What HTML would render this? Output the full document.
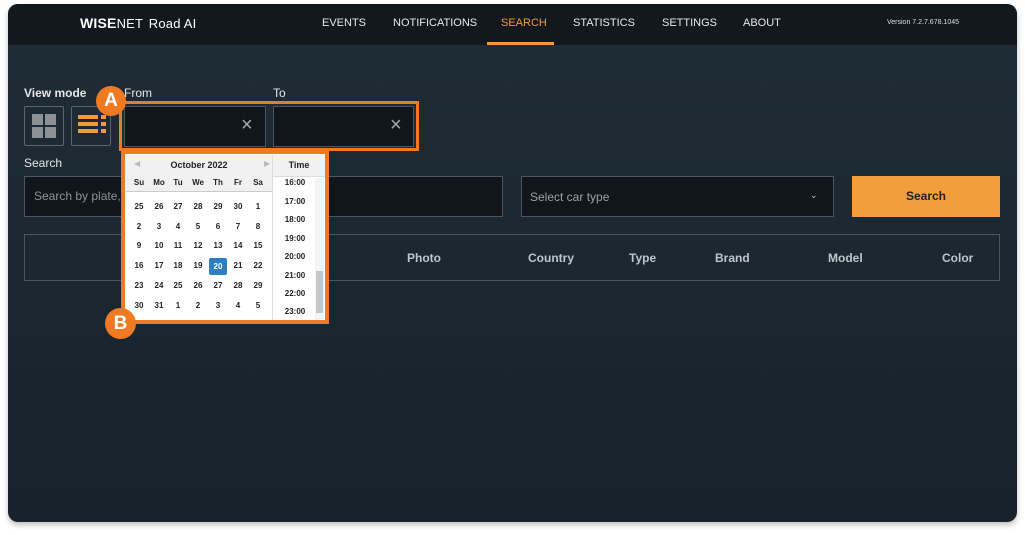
<!DOCTYPE html>
<html><head><meta charset="utf-8"><style>
*{margin:0;padding:0;box-sizing:border-box}
body{width:1025px;height:535px;background:#fff;font-family:"Liberation Sans",sans-serif;position:relative;overflow:hidden}
.abs{position:absolute}
.panel{left:8px;top:4px;width:1009px;height:518px;border-radius:10px;background:linear-gradient(#1f2d37,#17222b);overflow:hidden;box-shadow:0 3px 6px rgba(0,0,0,.25)}
.hdr{left:0;top:0;width:1009px;height:41px;background:#12181d}
.nav{color:#e8e8e8;font-size:11px;top:13px}
.lbl{color:#e6e6e6;font-size:12px}
.inp{background:#10161b;border:1px solid #4a5660}
.d{position:absolute;width:18px;height:15px;line-height:15px;text-align:center;font-size:8px;font-weight:bold;color:#222}
.t{position:absolute;left:278px;width:34px;font-size:8px;color:#222;text-align:center;font-weight:bold}
.th{color:#bfc5ca;font-size:12px;font-weight:bold;top:251px}
</style></head><body>
<div class="abs panel">
 <div class="abs hdr">
  <div class="abs" style="left:72px;top:11px;color:#fff;font-size:13px;letter-spacing:.2px"><b style="font-size:14px">WISE</b>NET <span style="margin-left:2px">Road AI</span></div>
  <div class="abs nav" style="left:314px">EVENTS</div>
  <div class="abs nav" style="left:385px">NOTIFICATIONS</div>
  <div class="abs nav" style="left:493px;color:#f29a38">SEARCH</div>
  <div class="abs" style="left:479px;top:38px;width:67px;height:3px;background:#f29a38"></div>
  <div class="abs nav" style="left:565px">STATISTICS</div>
  <div class="abs nav" style="left:654px">SETTINGS</div>
  <div class="abs nav" style="left:735px">ABOUT</div>
  <div class="abs" style="left:879px;top:15px;color:#ddd;font-size:7px">Version 7.2.7.678.1045</div>
 </div>
</div>
<div class="abs lbl" style="left:24px;top:86px;font-weight:bold">View mode</div>
<div class="abs lbl" style="left:124px;top:86px">From</div>
<div class="abs lbl" style="left:273px;top:86px">To</div>
<div class="abs" style="left:24px;top:106px;width:40px;height:40px;border:1px solid #5a656e;border-radius:2px"></div>
<div class="abs" style="left:32px;top:114px;width:11px;height:11px;background:#8a9298"></div>
<div class="abs" style="left:45px;top:114px;width:11px;height:11px;background:#8a9298"></div>
<div class="abs" style="left:32px;top:127px;width:11px;height:11px;background:#8a9298"></div>
<div class="abs" style="left:45px;top:127px;width:11px;height:11px;background:#8a9298"></div>
<div class="abs" style="left:71px;top:106px;width:40px;height:40px;border:1px solid #5a656e;border-radius:2px"></div>
<div class="abs" style="left:78px;top:115px;width:20px;height:4px;background:#f29a38;box-shadow:0 7px 0 #f29a38,0 14px 0 #f29a38"></div>
<div class="abs" style="left:101px;top:115px;width:5px;height:4px;background:#f29a38;box-shadow:0 7px 0 #f29a38,0 14px 0 #f29a38"></div>
<div class="abs" style="left:119px;top:101px;width:300px;height:50px;border:3px solid #f07a22"></div>
<div class="abs inp" style="left:124px;top:106px;width:142px;height:41px"></div>
<div class="abs" style="left:241px;top:114px;color:#aaa;font-size:20px">×</div>
<div class="abs inp" style="left:273px;top:106px;width:141px;height:41px"></div>
<div class="abs" style="left:390px;top:114px;color:#aaa;font-size:20px">×</div>
<div class="abs" style="left:96px;top:86px;width:30px;height:30px;border-radius:50%;background:#f07a22;color:#fff;font-weight:bold;font-size:19px;text-align:center;line-height:30px">A</div>
<div class="abs lbl" style="left:24px;top:156px">Search</div>
<div class="abs inp" style="left:24px;top:176px;width:479px;height:41px"></div>
<div class="abs" style="left:34px;top:189px;color:#8a939a;font-size:12px">Search by plate,</div>
<div class="abs inp" style="left:521px;top:176px;width:313px;height:41px"></div>
<div class="abs" style="left:530px;top:190px;color:#9aa2a8;font-size:12px">Select car type</div>
<div class="abs" style="left:810px;top:190px;color:#ccc;font-size:9px">&#8964;</div>
<div class="abs" style="left:852px;top:176px;width:148px;height:41px;background:#f29e3a;color:#222;font-weight:bold;font-size:12px;text-align:center;line-height:41px">Search</div>
<div class="abs" style="left:24px;top:234px;width:976px;height:47px;border:1px solid #4a5660"></div>
<div class="abs th" style="left:407px">Photo</div>
<div class="abs th" style="left:528px">Country</div>
<div class="abs th" style="left:629px">Type</div>
<div class="abs th" style="left:715px">Brand</div>
<div class="abs th" style="left:828px">Model</div>
<div class="abs th" style="left:942px">Color</div>
<div class="abs" style="left:121px;top:150px;width:208px;height:174px;background:#f07a22"></div>
<div class="abs" style="left:125px;top:154px;width:200px;height:166px;background:#fff"></div>
<div class="abs" style="left:126px;top:155px;width:146px;height:37px;background:#f1f1f1;border-bottom:1px solid #ccc"></div>
<div class="abs" style="left:273px;top:155px;width:52px;height:22px;background:#f1f1f1;border-bottom:1px solid #ddd"></div>
<div class="abs" style="left:272px;top:155px;width:1px;height:165px;background:#ddd"></div>
<div class="abs" style="left:134px;top:159px;color:#bbb;font-size:8px">◀</div>
<div class="abs" style="left:264px;top:159px;color:#bbb;font-size:8px">▶</div>
<div class="abs" style="left:126px;top:160px;width:146px;text-align:center;font-size:9px;font-weight:bold;color:#222">October 2022</div>
<div class="abs" style="left:273px;top:160px;width:52px;text-align:center;font-size:9px;font-weight:bold;color:#222">Time</div>
<div class="abs" style="left:315px;top:178px;width:9px;height:142px;background:#f4f4f4"></div>
<div class="abs" style="left:316px;top:271px;width:7px;height:42px;background:#c6c6c6"></div>
<div id="cal"></div>
<div class="abs" style="left:105px;top:308px;width:31px;height:31px;border-radius:50%;background:#f07a22;color:#fff;font-weight:bold;font-size:19px;text-align:center;line-height:31px">B</div>
<script>
var c=document.getElementById('cal'),h='';
var xs=[139,159,178,198,218,238,258],dw=['Su','Mo','Tu','We','Th','Fr','Sa'];
for(var i=0;i<7;i++)h+='<div class="d" style="left:'+(xs[i]-9)+'px;top:175px">'+dw[i]+'</div>';
var days=[25,26,27,28,29,30,1];for(var d=2;d<=31;d++)days.push(d);days.push(1,2,3,4,5);
var ys=[207,227,246,266,286,306];
for(var k=0;k<42;k++){var r=Math.floor(k/7),col=k%7;var s=days[k]==20&&r==3?'background:#2e7ec4;color:#fff;border-radius:2px;height:17px;line-height:17px;':'';
h+='<div class="d" style="'+s+'left:'+(xs[col]-9)+'px;top:'+(ys[r]-8)+'px">'+days[k]+'</div>';}
var ty=[183,202,220,239,257,276,294,312];
for(var j=0;j<8;j++)h+='<div class="t" style="top:'+(ty[j]-5)+'px">'+(16+j)+':00</div>';
c.innerHTML=h;
</script>
</body></html>
